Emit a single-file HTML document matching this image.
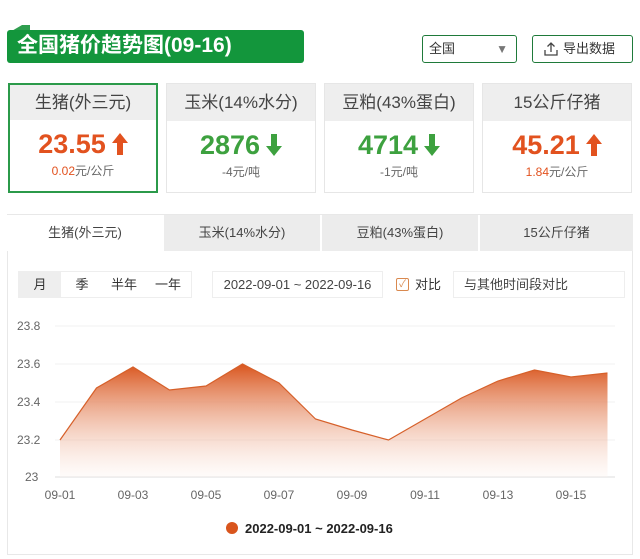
<!DOCTYPE html>
<html><head><meta charset="utf-8"><style>
*{margin:0;padding:0;box-sizing:border-box}
body{width:640px;height:559px;background:#fff;font-family:"Liberation Sans","Noto Sans CJK SC",sans-serif;position:relative;overflow:hidden;color:#333}
.a{position:absolute}
.title{left:7px;top:30px;width:297px;height:33px;background:#13963c;border-radius:3px;color:#fff;font-weight:bold;font-size:21px;line-height:31px;padding-left:10px}
.fold{left:10px;top:25px;width:20px;height:7px;background:#2f9e4f;clip-path:polygon(0 100%,60% 0,100% 0,100% 100%)}
.sel{left:422px;top:35px;width:95px;height:28px;border:1px solid #1f7a3a;border-radius:3px;font-size:13px;line-height:26px;padding-left:6px}
.btn{left:532px;top:35px;width:101px;height:28px;border:1px solid #1f7a3a;border-radius:3px;font-size:13px;line-height:26px;padding-left:30px}
.card{top:83px;width:150px;height:110px;border:1px solid #e6e6e6;text-align:center}
.card .h{position:absolute;left:0;right:0;top:0;height:37px;background:#eeeeee;font-size:17px;line-height:37px;color:#444}
.card .v{position:absolute;left:0;right:0;top:43px;height:36px;font-size:27px;font-weight:bold;line-height:36px}
.card .v svg{vertical-align:-2px;margin-left:6px}
.card .s{position:absolute;left:0;right:0;top:80px;font-size:12px;line-height:16px}
.red{color:#e2521f}.grn{color:#3da13f}
.panel{left:7px;top:214px;width:626px;height:341px;border:1px solid #e8e8e8;background:#fff}
.tab{top:215px;height:36px;background:#ececec;font-size:13px;line-height:36px;text-align:center;color:#444;border-left:1px solid #fff}
.seg{top:271px;height:27px;border:1px solid #eee;font-size:13px;line-height:25px}
</style></head><body>
<div class="a fold"></div>
<div class="a title">全国猪价趋势图(09-16)</div>
<div class="a sel">全国<span style="position:absolute;right:8px;top:0;color:#777;font-size:12px">▼</span></div>
<div class="a btn"><svg class="a" style="left:10px;top:5px" width="16" height="16" viewBox="0 0 16 16" fill="none" stroke="#444" stroke-width="1.3"><path d="M8 11V2M4.5 5.5L8 2l3.5 3.5M2 9v5h12V9"/></svg>导出数据</div>

<div class="a card" style="left:8px;border:2px solid #2b9a4a"><div class="h" style="height:35px;line-height:35px">生猪(外三元)</div><div class="v red" style="top:41px">23.55<svg width="16" height="22" viewBox="0 0 16 22"><path d="M8 0L16 10H11V22H5V10H0Z" fill="#e2521f"/></svg></div><div class="s red" style="top:78px">0.02<span style="color:#666">元/公斤</span></div></div>
<div class="a card" style="left:166px"><div class="h">玉米(14%水分)</div><div class="v grn">2876<svg width="16" height="22" viewBox="0 0 16 22"><path d="M8 22L16 12H11V0H5V12H0Z" fill="#3da13f"/></svg></div><div class="s" style="color:#666">-4元/吨</div></div>
<div class="a card" style="left:324px"><div class="h">豆粕(43%蛋白)</div><div class="v grn">4714<svg width="16" height="22" viewBox="0 0 16 22"><path d="M8 22L16 12H11V0H5V12H0Z" fill="#3da13f"/></svg></div><div class="s" style="color:#666">-1元/吨</div></div>
<div class="a card" style="left:482px"><div class="h">15公斤仔猪</div><div class="v red">45.21<svg width="16" height="22" viewBox="0 0 16 22"><path d="M8 0L16 10H11V22H5V10H0Z" fill="#e2521f"/></svg></div><div class="s red">1.84<span style="color:#666">元/公斤</span></div></div>

<div class="a panel"></div>
<div class="a tab" style="left:7px;width:155px;background:#fff">生猪(外三元)</div>
<div class="a tab" style="left:163px;width:157px">玉米(14%水分)</div>
<div class="a tab" style="left:321px;width:157px">豆粕(43%蛋白)</div>
<div class="a tab" style="left:479px;width:154px">15公斤仔猪</div>

<div class="a seg" style="left:18px;width:174px;display:flex">
<span style="width:42px;background:#eee;text-align:center">月</span><span style="width:42px;text-align:center">季</span><span style="width:42px;text-align:center">半年</span><span style="width:46px;text-align:center">一年</span></div>
<div class="a seg" style="left:212px;width:171px;text-align:center;color:#444">2022-09-01 ~ 2022-09-16</div>
<div class="a" style="left:396px;top:278px;width:13px;height:13px;border:1px solid #d9894f;border-radius:2px;font-size:10px;line-height:11px;text-align:center;color:#d9894f">✓</div>
<div class="a" style="left:415px;top:271px;font-size:13px;line-height:27px">对比</div>
<div class="a seg" style="left:453px;width:172px;padding-left:10px;color:#444">与其他时间段对比</div>

<svg class="a" style="left:0;top:310px" width="640" height="249">
<defs><linearGradient id="g" x1="0" y1="0" x2="0" y2="1"><stop offset="0" stop-color="#d9551d"/><stop offset="1" stop-color="#fdf3ee" stop-opacity=".3"/></linearGradient></defs>
<g stroke="#f0f0f0"><line x1="55" x2="615" y1="16" y2="16"/><line x1="55" x2="615" y1="54" y2="54"/><line x1="55" x2="615" y1="92" y2="92"/><line x1="55" x2="615" y1="130" y2="130"/><line x1="55" x2="615" y1="167" y2="167" stroke="#ddd"/></g>
<path d="M60,130 L96.5,78 L133,57 L169.5,80 L206,76 L242.5,54 L279,73 L315.5,109 L352,120 L388.5,130 L425,109 L461.5,88 L498,71 L534.5,60 L571,67 L607.5,63 L607.5,167 L60,167Z" fill="url(#g)"/>
<path d="M60,130 L96.5,78 L133,57 L169.5,80 L206,76 L242.5,54 L279,73 L315.5,109 L352,120 L388.5,130 L425,109 L461.5,88 L498,71 L534.5,60 L571,67 L607.5,63" fill="none" stroke="#d6602a" stroke-width="1.2"/>
<g font-size="12" fill="#666"><text x="17" y="20">23.8</text><text x="17" y="58">23.6</text><text x="17" y="96">23.4</text><text x="17" y="134">23.2</text><text x="25" y="171">23</text></g>
<g font-size="12" fill="#666" text-anchor="middle"><text x="60" y="189">09-01</text><text x="133" y="189">09-03</text><text x="206" y="189">09-05</text><text x="279" y="189">09-07</text><text x="352" y="189">09-09</text><text x="425" y="189">09-11</text><text x="498" y="189">09-13</text><text x="571" y="189">09-15</text></g>
<circle cx="232" cy="218" r="6" fill="#d9551d"/>
<text x="245" y="223" font-size="13" font-weight="bold" fill="#222">2022-09-01 ~ 2022-09-16</text>
</svg>
</body></html>
